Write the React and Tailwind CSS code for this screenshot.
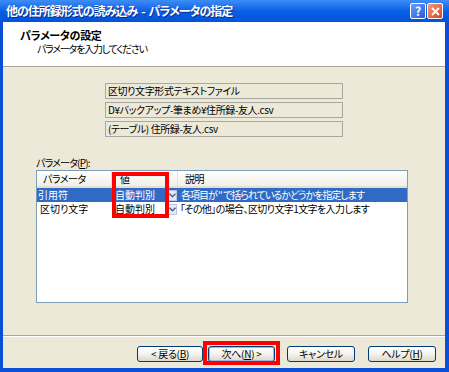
import React from 'react'

const U = ({ children }) => <span className="underline">{children}</span>

const Field = ({ children }) => (
    <div className="h-[16px] w-[238px] border border-[#a9a7a0] bg-[#ece9d8] px-[2px] flex items-center text-[10px] leading-none tracking-[-0.4px] text-black">
        {children}
    </div>
)

const ComboArrow = () => (
    <div className="w-[9px] h-[11px] bg-[#e3eaf9] border border-[#b7c6e8] flex items-center justify-center">
        <svg width="7" height="5" viewBox="0 0 7 5">
            <path d="M0.5 0.8 L3.5 3.8 L6.5 0.8" fill="none" stroke="#4d6185" strokeWidth="1.4" />
        </svg>
    </div>
)

const Btn = ({ w, children, focused }) => (
    <div className={`h-[16px] ${w} rounded-[3px] border border-[#003c74] bg-gradient-to-b from-[#ffffff] via-[#f4f3ee] to-[#dcd8ca] flex items-center justify-center text-[10px] leading-none tracking-[-0.3px] text-black ${focused ? 'shadow-[inset_0_0_0_1px_#9db9eb]' : ''}`}>
        {children}
    </div>
)

const App = () => {
    return (
        <div className="w-[449px] h-[372px] flex flex-col bg-[#0a4fd6] overflow-hidden font-['Noto_Sans_CJK_JP',sans-serif] [font-feature-settings:'palt']">
            {/* title bar */}
            <div className="h-[22px] flex items-center pl-[6px] pr-[6px] bg-gradient-to-b from-[#3d8df6] via-[#0a5fe6] to-[#0453d8]">
                <p className="flex-1 text-white font-bold text-[12px] leading-none tracking-[-1px] [text-shadow:1px_1px_0_#0a2a8a]">
                    他の住所録形式の読み込み<span className="px-[4px]">-</span>パラメータの指定
                </p>
                <div className="flex gap-[1px]">
                    <div className="w-[16px] h-[16px] rounded-[2px] border border-white bg-gradient-to-br from-[#6a9cf8] to-[#2459e0] flex items-center justify-center text-white font-bold text-[12px] leading-none">
                        ?
                    </div>
                    <div className="w-[16px] h-[16px] rounded-[2px] border border-white bg-gradient-to-br from-[#f09a7a] to-[#d6431c] flex items-center justify-center">
                        <svg width="9" height="9" viewBox="0 0 9 9">
                            <path d="M1 1 L8 8 M8 1 L1 8" stroke="white" strokeWidth="1.8" />
                        </svg>
                    </div>
                </div>
            </div>

            {/* window client */}
            <div className="flex-1 ml-[3px] mr-[4px] mb-[4px] bg-[#ece9d8] flex flex-col">
                <div className="h-[45px] bg-white border-b border-[#aca899] pl-[17px] pt-[7px]">
                    <p className="font-bold text-[11px] leading-[13px] tracking-[-0.3px] text-black">パラメータの設定</p>
                    <p className="text-[10px] leading-[13px] tracking-[-1.2px] text-black pl-[17px]">パラメータを入力してください</p>
                </div>

                <div className="flex-1 flex flex-col">
                    <div className="pl-[102px] pt-[16px] flex flex-col gap-[3px]">
                        <Field>区切り文字形式テキストファイル</Field>
                        <Field>D¥バックアップ-筆まめ¥住所録-友人.csv</Field>
                        <Field>(テーブル) 住所録-友人.csv</Field>
                    </div>

                    <div className="pl-[33px] mt-[20px]">
                        <p className="text-[10px] leading-[12px] tracking-[-0.8px] text-black">パラメータ(<U>P</U>):</p>
                        <div className="relative mt-[1px] w-[372px] h-[133px] border border-[#7f9db9] bg-white text-[10px] leading-none">
                            <div className="h-[17px] flex items-center bg-gradient-to-b from-[#ffffff] to-[#f1efe6] border-b-2 border-[#e2e0d5] text-black tracking-[-0.5px]">
                                <div className="w-[75px] pl-[6px] h-full flex items-center border-r border-[#e5e3d9]">パラメータ</div>
                                <div className="w-[66px] pl-[8px] h-full flex items-center border-r border-[#e5e3d9]">値</div>
                                <div className="flex-1 pl-[7px]">説明</div>
                            </div>
                            <div className="h-[14px] flex items-center bg-[#316ac5] text-white">
                                <div className="w-[75px] pl-[1px]">引用符</div>
                                <div className="w-[66px] pl-[3px] flex items-center justify-between pr-[1px]">
                                    <span>自動判別</span>
                                    <ComboArrow />
                                </div>
                                <div className="flex-1 pl-[3px] tracking-[-1px]">各項目が " で括られているかどうかを指定します</div>
                            </div>
                            <div className="h-[14px] flex items-center text-black">
                                <div className="w-[75px] pl-[3px]">区切り文字</div>
                                <div className="w-[66px] pl-[3px] flex items-center justify-between pr-[1px]">
                                    <span>自動判別</span>
                                    <ComboArrow />
                                </div>
                                <div className="flex-1 pl-[2px] tracking-[-0.6px]">「その他」の場合、区切り文字1文字を入力します</div>
                            </div>
                            <div className="absolute left-[75px] top-[1px] w-[57px] h-[46px] border-[4px] border-[#ff0000]"></div>
                        </div>
                    </div>
                </div>

                <div className="border-t border-[#aca899] h-[2px] bg-white"></div>
                <div className="h-[31px] flex items-start pt-[9px] pl-[134px]">
                    <Btn w="w-[66px]">&lt; 戻る(<U>B</U>)</Btn>
                    <div className="relative ml-[5px]">
                        <Btn w="w-[67px]" focused>次へ(<U>N</U>) &gt;</Btn>
                        <div className="absolute -left-[5px] -top-[5px] w-[77px] h-[24px] border-[4px] border-[#ff0000]"></div>
                    </div>
                    <div className="ml-[12px]">
                        <Btn w="w-[68px]">キャンセル</Btn>
                    </div>
                    <div className="ml-[13px]">
                        <Btn w="w-[68px]">ヘルプ(<U>H</U>)</Btn>
                    </div>
                </div>
            </div>
        </div>
    )
}

export default App
